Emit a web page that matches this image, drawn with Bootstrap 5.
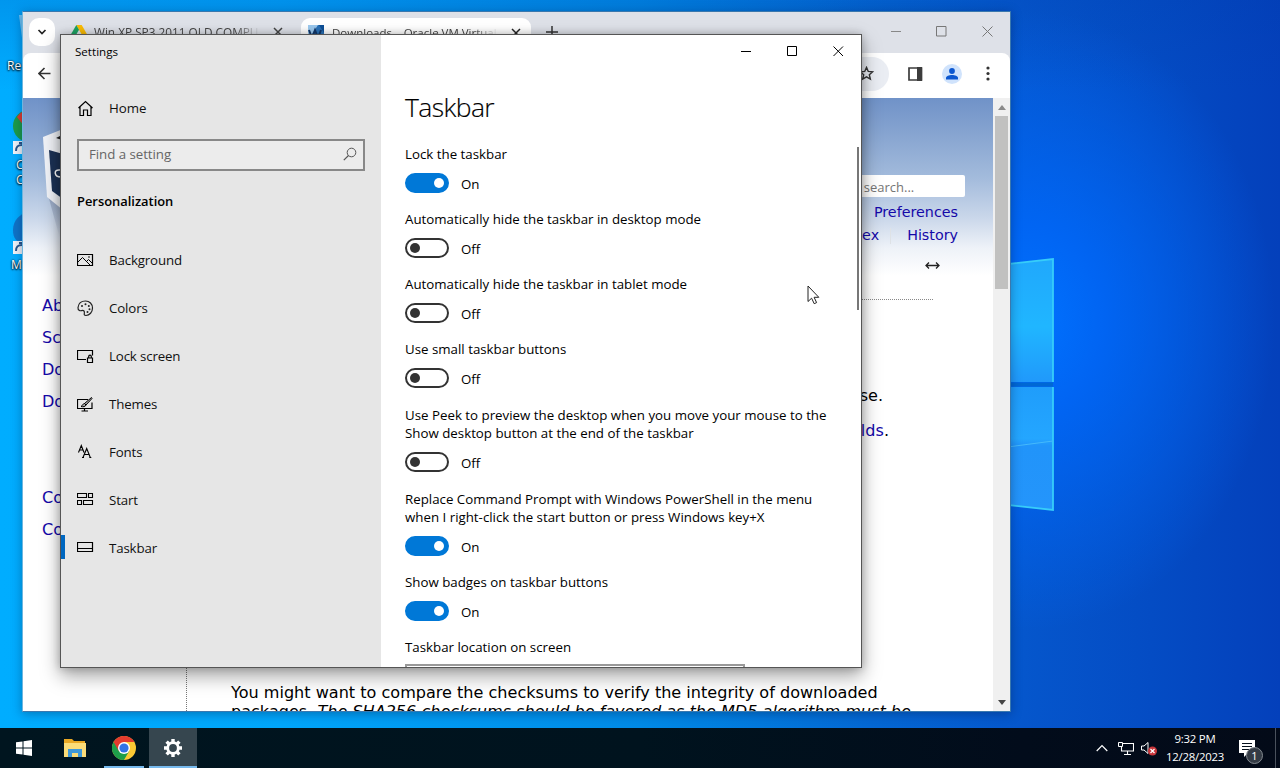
<!DOCTYPE html>
<html lang="en">
<head>
<meta charset="utf-8">
<meta name="viewport" content="width=device-width, initial-scale=1">
<title>Settings</title>
<link href="https://cdn.jsdelivr.net/npm/bootstrap@5.3.0/dist/css/bootstrap.min.css" rel="stylesheet">
<style>
  body { font-family: "Open Sans", "Noto Sans", sans-serif; font-size: 13.3px; line-height: 18px; color: #000; }
  svg { display: block; flex: none; }
  .desktop { width: 1280px; height: 768px;
    background:
      linear-gradient(180deg, rgba(0,60,170,.20) 0, rgba(0,60,170,0) 90px),
      radial-gradient(ellipse 245px 310px at 1030px 320px, #0071ff 0, rgba(0,104,250,.85) 30%, rgba(0,90,220,0) 100%),
      linear-gradient(90deg, #00adff 0, #00a6fb 22%, #008ae6 50%, #0468d4 68%, #0556cc 80%, #044cc4 90%, #0440bb 100%); }
  .wall { left: 1000px; top: 240px; }

  /* desktop shortcuts */
  .shortcut { color: #fff; font-size: 12px; line-height: 15px; text-shadow: 0 1px 2px #000, 0 0 2px #000; }

  /* browser window */
  .browser { left: 22px; top: 11px; width: 989px; height: 701px; border: 1px solid #3a78ae; border-left-color: #6db6df; background: #fff; box-shadow: 0 2px 10px rgba(0,20,60,.35); }
  .tabstrip { height: 41px; background: #dee1e8; }
  .tab-search { width: 26px; height: 28px; border-radius: 10px; background: #fff; margin: 6px 0 0 6px; }
  .tab-title { font-size: 11.8px; color: #444; width: 166px; overflow: hidden; -webkit-mask-image: linear-gradient(90deg, #000 85%, transparent); mask-image: linear-gradient(90deg, #000 85%, transparent); }
  .tab-open { width: 230px; height: 36px; margin-top: 6px; background: #fff; border-radius: 9px 9px 0 0; }
  .tool { height: 45px; border-radius: 8px 8px 0 0; }
  .omni { width: 60px; height: 34px; border-radius: 17px; background: #eaedf3; }
  .avatar { width: 20px; height: 20px; background: #d0e3fc; }
  .page-view { font-family: "DejaVu Sans", Verdana, sans-serif; font-size: 16.07px;
    background: linear-gradient(180deg, #7092c8 0, #86a4d0 35px, #a3bbdc 80px, #cad7ea 120px, #eef2f8 150px, #fff 178px); }
  .page-view a { color: #1508a8; text-decoration: none; }
  .side-links { width: 164px; padding-left: 19px; padding-top: 192px; line-height: 32px; }
  .side-links::after { content: ""; margin: auto 0 0 auto; height: 60px; border-right: 1px dotted #777; }
  .hsearch { width: 143px; height: 22px; background: #fff; border-radius: 2px; color: #757575; font-family: "Open Sans", sans-serif; font-size: 13px; line-height: 24px; padding-right: 9px; }
  .hlink { font-size: 14.3px; line-height: 23px; }
  .wiki-rule { border-top: 1px dotted #888; width: 702px; }
  .sbar { width: 17px; background: #f0f0f0; }
  .sthumb { width: 13px; height: 173px; background: #c1c1c0; }

  /* settings window */
  .settings { left: 60px; top: 34px; width: 802px; height: 634px; border: 1px solid #555; background: #fff; box-shadow: 0 8px 18px rgba(0,0,0,.36), 0 0 8px rgba(0,0,0,.22); }
  .pane-left { width: 320px; background: #e6e6e6; }
  .find { width: 288px; height: 32px; border: 2px solid #888; color: #666; font-size: 13.3px; background: #ececec; }
  .side-item { height: 48px; padding-left: 16px; gap: 15px; color: #111; letter-spacing: -.15px; }
  .side-item.current { padding-left: 0; }
  .side-item.current::before { content: ""; width: 4px; height: 24px; background: #0067c0; margin: -2px -3px 0 0; }
  .big-title { font-size: 26.5px; line-height: 36px; font-weight: 300; letter-spacing: -.6px; color: #000; -webkit-text-stroke: .15px #000; }
  .opt { margin-bottom: 16px; }
  .opt-wide { margin-bottom: 17px; }
  .switch { width: 44px; height: 20px; border: 2px solid #333; border-radius: 10px; margin: 10px 12px 0 0; padding: 0 3px; }
  .switch::after { content: ""; width: 10px; height: 10px; border-radius: 50%; background: #333; }
  .switch.is-on { background: #0078d7; border-color: #0078d7; justify-content: flex-end; }
  .switch.is-on::after { background: #fff; }
  .state { height: 20px; margin-top: 11px; line-height: 20px; }
  .combo { width: 340px; height: 32px; border: 2px solid #999; margin-top: -8px; }
  .pane-scroll { width: 2px; height: 163px; background: #777; top: 112px; right: 2px; }

  /* bottom bar */
  .taskbar { height: 40px; background: linear-gradient(90deg, #00151f 0, #00131e 50%, #020c1b 80%, #030a18 100%); color: #fff; }
  .tb-app { width: 48px; height: 40px; }
  .tb-run { height: 2px; background: #76b9ed; }
  .clock { font-size: 11.4px; line-height: 18px; width: 62px; letter-spacing: -.25px; }
  .note-count { width: 17px; height: 17px; border-radius: 50%; background: #343b45; border: 1px solid #858b92; font-size: 11px; line-height: 15px; left: 7px; top: 7px; }
</style>
</head>
<body class="m-0 overflow-hidden">
<div class="desktop position-relative overflow-hidden d-flex flex-column justify-content-end">

  <!-- wallpaper window logo -->
  <svg class="wall position-absolute" width="70" height="285" viewBox="1000 240 70 285">
    <defs>
      <linearGradient id="p1" x1="0" y1="0" x2="0" y2="1"><stop offset="0" stop-color="#20a8fc"/><stop offset=".55" stop-color="#20b6ff"/><stop offset="1" stop-color="#2099fb"/></linearGradient>
      <linearGradient id="p2" x1="0" y1="0" x2="0" y2="1"><stop offset="0" stop-color="#1f9dfb"/><stop offset=".42" stop-color="#24a6ff"/><stop offset=".48" stop-color="#2194fa"/><stop offset="1" stop-color="#2495fb"/></linearGradient>
    </defs>
    <path d="M1000 265l53-6v123h-53z" fill="url(#p1)"/>
    <path d="M1000 387h53v123l-53-6z" fill="url(#p2)"/>
    <path d="M1000 382.500h53v4h-53z" fill="#0068d4"/>
    <path d="M1000 265l53-6v123M1053 387v123l-53-6" fill="none" stroke="#37cdf9" stroke-width="1.800"/>
    <path d="M1000 448l53-7" stroke="#45b9fb" fill="none"/>
  </svg>

  <!-- desktop shortcuts, mostly behind the windows -->
  <div class="shortcut position-absolute" style="left:7px;top:58px">Re</div>
  <svg class="position-absolute" style="left:12px;top:12px" width="16" height="44"><path d="M7 3h9v38h-4z" fill="#b8dcf2" opacity=".6"/></svg>
  <svg class="position-absolute" style="left:12px;top:100px" width="16" height="62"><circle cx="17" cy="26" r="16" fill="#1c9b49"/><path d="M5 17a16 16 0 0 1 12-7v16l-5 0z" fill="#e23a2e"/><rect x="1" y="41" width="13" height="13" fill="#eef3f8"/><path d="M4 51c0-5 2-6 6-6m-3-2h5v5" stroke="#28568c" stroke-width="2" fill="none"/></svg>
  <div class="shortcut position-absolute" style="left:16px;top:157px">C<br>C</div>
  <svg class="position-absolute" style="left:12px;top:210px" width="16" height="50"><path d="M1 20C1 10 8 4 16 2v30C6 34 1 30 1 20z" fill="#0f74c8"/><rect x="1" y="31" width="13" height="13" fill="#eef3f8"/><path d="M4 41c0-5 2-6 6-6m-3-2h5v5" stroke="#28568c" stroke-width="2" fill="none"/></svg>
  <div class="shortcut position-absolute" style="left:11px;top:257px">M</div>

  <!-- browser -->
  <div class="browser position-absolute d-flex flex-column overflow-hidden">
    <div class="tabstrip d-flex flex-shrink-0">
      <div class="tab-search d-flex align-items-center justify-content-center"><svg width="12" height="12"><path d="M2.500 4L6 7.500 9.500 4" fill="none" stroke="#222" stroke-width="1.700"/></svg></div>
      <div class="d-flex align-items-center ps-3" style="width:251px;padding-bottom:2px">
        <svg class="me-2" width="16" height="14" viewBox="0 0 16 14"><path d="M5.300 0h5.400L16 9.300h-5.400z" fill="#fbbc04"/><path d="M5.300 0L0 9.300 2.700 14 8 4.700z" fill="#1ea362"/><path d="M5.400 9.300H16L13.300 14H2.700z" fill="#4285f4"/></svg>
        <span class="tab-title text-nowrap" style="margin-left:-1px">Win XP SP3 2011 OLD COMPU</span>
        <svg style="margin-left:13px" width="10" height="10"><path d="M1 1l8 8M9 1l-8 8" stroke="#444" stroke-width="1.500"/></svg>
      </div>
      <div class="tab-open d-flex align-items-center" style="margin-left:-5px;padding:0 0 7px 7px">
        <svg class="me-2" width="16" height="16"><rect width="16" height="16" fill="#2b72b8"/><path d="M0 0h10L4 9H0z" fill="#9cc9ee"/><path d="M1 5l3 8 3-8 3 8 3-8" stroke="#12386a" stroke-width="2" fill="none"/><path d="M11 0h5v8z" fill="#0e4f96"/></svg>
        <span class="tab-title text-nowrap" style="font-size:11.500px">Downloads – Oracle VM Virtual</span>
        <svg style="margin-left:13px" width="10" height="10"><path d="M1 1l8 8M9 1l-8 8" stroke="#222" stroke-width="1.500"/></svg>
      </div>
      <svg style="margin:14px 0 0 15px" width="12" height="12"><path d="M6 0v12M0 6h12" stroke="#333" stroke-width="1.500"/></svg>
      <div class="ms-auto d-flex align-items-center" style="gap:35px;padding:0 17px 3px 0">
        <svg width="10" height="11"><path d="M0 5.500h10" stroke="#888"/></svg>
        <svg width="11" height="11"><path d="M.5.5h9.500v9.500H.5z" fill="none" stroke="#777"/></svg>
        <svg width="11" height="11"><path d="M.5.5l10 10M10.500.5l-10 10" stroke="#777"/></svg>
      </div>
    </div>
    <div style="background:#dee1e8">
      <div class="tool bg-white d-flex align-items-center pb-1">
        <svg style="margin-left:15px" width="13" height="13"><path d="M12.500 6.500H1.500M6.500 1L1 6.500 6.500 12" fill="none" stroke="#333" stroke-width="1.600"/></svg>
        <div class="omni ms-auto d-flex align-items-center justify-content-end" style="margin-right:19px;padding-right:15px"><svg width="15" height="15" viewBox="0 0 16 16"><path d="M8 1.500l1.900 4.300 4.700.4-3.600 3.100 1.100 4.600L8 11.500l-4.100 2.400L5 9.300 1.400 6.200l4.700-.4z" fill="none" stroke="#333" stroke-width="1.500"/></svg></div>
        <svg width="15" height="14"><path d="M1 1h12.500v12H1z" fill="none" stroke="#3c3c3c" stroke-width="1.700"/><path d="M9 0h5v14H9z" fill="#3c3c3c"/></svg>
        <div class="avatar rounded-circle d-flex align-items-center justify-content-center" style="margin:0 24px 0 19px"><svg width="14" height="14"><circle cx="7" cy="4" r="2.900" fill="#0b57d0"/><path d="M1 12.500v-1.500C1 9 4 8 7 8s6 1 6 3v1.500z" fill="#0b57d0"/></svg></div>
        <svg style="margin-right:20px" width="4" height="15"><circle cx="2" cy="2" r="1.600" fill="#333"/><circle cx="2" cy="7.500" r="1.600" fill="#333"/><circle cx="2" cy="13" r="1.600" fill="#333"/></svg>
      </div>
    </div>
    <div class="page-view d-flex flex-grow-1 overflow-hidden">
      <div class="side-links flex-shrink-0 d-flex flex-column position-relative">
        <svg class="position-absolute" style="left:15px;top:30px" width="50" height="112" viewBox="38 129 50 112"><defs><linearGradient id="sh" x1="0" y1="0" x2="0" y2="1"><stop offset="0" stop-color="#6d7c9c" stop-opacity=".5"/><stop offset="1" stop-color="#6d7c9c" stop-opacity="0"/></linearGradient></defs><path d="M48 196l40 22v22H60z" fill="url(#sh)"/><path d="M43 138l20-8v81l-16-13z" fill="#f1f3f8"/><path d="M49 151l14 4v45l-11-8z" fill="#1c3256"/><path d="M56 139l6-3v5z" fill="#222"/><path d="M60 171c-7-1-6 7 1 7" stroke="#fff" stroke-width="1.500" fill="none"/></svg>
        <a href="#">Abo</a><a href="#">Scr</a><a href="#">Doc</a><a href="#" class="mb-5">Doc</a>
        <a href="#" style="margin-top:16px">Con</a><a href="#">Com</a>
      </div>
      <div class="flex-grow-1">
        <div class="d-flex flex-column align-items-end" style="padding:77px 28px 0 0;height:201px">
          <div class="hsearch text-center">search...</div>
          <div class="hlink" style="margin:4px 7px 0 0"><a href="#">Preferences</a></div>
          <div class="hlink d-flex align-items-center" style="margin-right:7px"><a href="#">ex</a><span class="border-start" style="height:16px;margin:0 16px 0 11px"></span><a href="#">History</a></div>
          <svg style="margin:14px 25px 0 0" width="15" height="9"><path d="M1 4.500h13M4 1.500l-3 3 3 3M11 1.500l3 3-3 3" fill="none" stroke="#222" stroke-width="1.300"/></svg>
        </div>
        <div class="wiki-rule ms-auto" style="margin-right:60px"></div>
        <div class="text-end" style="padding:84px 110px 0 0;line-height:24px">se.</div>
        <div class="text-end" style="padding:11px 104px 0 0;line-height:24px"><a href="#">lds</a>.</div>
        <div class="text-nowrap" style="padding-left:44px;margin-top:240px;line-height:19px">You might want to compare the checksums to verify the integrity of downloaded<br>packages. <i>The SHA256 checksums should be favored as the MD5 algorithm must be</i></div>
      </div>
      <div class="sbar flex-shrink-0 d-flex flex-column align-items-center">
        <svg style="margin:7px 0 6px" width="8" height="5"><path d="M0 5l4-5 4 5z" fill="#8a8a8a"/></svg>
        <div class="sthumb"></div>
        <svg class="mt-auto" style="margin-bottom:6px" width="8" height="5"><path d="M0 0h8L4 5z" fill="#444"/></svg>
      </div>
    </div>
  </div>

  <!-- settings -->
  <div class="settings position-absolute d-flex overflow-hidden">
    <div class="pane-left flex-shrink-0">
      <div style="font-size:11.600px;padding:8px 0 0 14px">Settings</div>
      <div class="side-item d-flex align-items-center" style="margin-top:23px;letter-spacing:0">
        <svg width="17" height="17"><path d="M1.500 8L8.500 1.500 15.500 8M3 7v8.500h3.500v-5.500h4v5.500h3.500V7" fill="none" stroke="#000" stroke-width="1.200"/></svg><span>Home</span>
      </div>
      <div class="find d-flex align-items-center justify-content-between" style="margin:7px 0 0 16px;padding:0 6px 2px 10px">
        <span style="letter-spacing:-.05px">Find a setting</span>
        <svg width="14" height="14"><circle cx="8.500" cy="5.500" r="4.300" fill="none" stroke="#555"/><path d="M5.500 8.500L.8 13.200" stroke="#555" stroke-width="1.200"/></svg>
      </div>
      <div style="font-weight:600;font-size:12.900px;padding:21px 0 26px 16px">Personalization</div>
      <div class="side-item d-flex align-items-center">
        <svg width="17" height="17"><path d="M.5 2.500h15v11H.5z" fill="none" stroke="#000" stroke-width="1.200"/><path d="M1 10l4.500-4.500 7.500 7.500M9.500 9.500L11.500 7.500l4 4" fill="none" stroke="#000"/><circle cx="12" cy="5" r=".8"/></svg><span>Background</span>
      </div>
      <div class="side-item d-flex align-items-center">
        <svg width="17" height="17"><path d="M1 7.500C1.500 3.500 4.500 1 8.500 1c4 0 7 3 7 7s-3 7.500-6.500 7.500c-3.500 0-.5-3-2-4.500C5.500 9.500 4 11.500 2.500 10.500 1 9.700.8 9 1 7.500z" fill="none" stroke="#222" stroke-width="1.200"/><g fill="#222"><circle cx="5" cy="6" r="1"/><circle cx="8.500" cy="4.200" r="1"/><circle cx="11.800" cy="6" r="1"/><circle cx="12.500" cy="9.300" r="1"/><circle cx="10.500" cy="12" r="1"/></g></svg><span>Colors</span>
      </div>
      <div class="side-item d-flex align-items-center">
        <svg width="17" height="17"><path d="M9 11.500H.5v-9h15v5" fill="none" stroke="#000" stroke-width="1.200"/><path d="M10.500 10h5v4.500h-5zM11.700 10V8.500a1.300 1.300 0 0 1 2.600 0V10" fill="none" stroke="#000" stroke-width="1.200"/></svg><span>Lock screen</span>
      </div>
      <div class="side-item d-flex align-items-center">
        <svg width="17" height="17"><path d="M11 3.500H.5v9h14.500V6.500M7.500 12.500v2.500M4.500 15h6.500" fill="none" stroke="#000" stroke-width="1.200"/><path d="M14.500 1.500l-7 6 1.500 1.500 6-6.500zM7.500 7.500C5.500 7.700 6 9.500 4 10.500c2 .5 4.500.3 5-1.500z" fill="#aaa" stroke="#000"/></svg><span>Themes</span>
      </div>
      <div class="side-item d-flex align-items-center">
        <svg width="17" height="17"><path d="M1.500 8.500L4.300 1.500 7 8.500M2.500 6h3.600M6 13.500l3.700-9 3.600 9M7.300 10.500h4.900M5 13.500h2M12.300 13.500h2" fill="none" stroke="#000" stroke-width="1.100"/></svg><span>Fonts</span>
      </div>
      <div class="side-item d-flex align-items-center">
        <svg width="17" height="17"><path d="M.5 1.500h9v4h-9zM11.500 1.500h4v4h-4zM.5 8.500h4v4h-4zM6.500 8.500h9v4h-9z" fill="none" stroke="#000" stroke-width="1.100"/></svg><span>Start</span>
      </div>
      <div class="side-item current d-flex align-items-center">
        <svg width="17" height="17"><path d="M.5 2.500h15v9H.5zM.5 8.500h15" fill="none" stroke="#000" stroke-width="1.200"/></svg><span>Taskbar</span>
      </div>
    </div>
    <div class="flex-grow-1 d-flex flex-column">
      <div class="d-flex justify-content-end" style="gap:35px;padding:11px 17px 0 0">
        <svg width="11" height="11"><path d="M0 5.500h10" stroke="#000"/></svg>
        <svg width="11" height="11"><path d="M.5.500h9v9h-9z" fill="none" stroke="#000"/></svg>
        <svg width="11" height="11"><path d="M.5.500l9.500 9.500M10 .5L.5 10" stroke="#000"/></svg>
      </div>
      <div style="padding:32px 0 0 24px">
        <div class="big-title" style="margin-bottom:20px">Taskbar</div>
        <div class="opt"><div>Lock the taskbar</div><div class="d-flex"><span class="switch is-on d-flex align-items-center"></span><span class="state">On</span></div></div>
        <div class="opt"><div>Automatically hide the taskbar in desktop mode</div><div class="d-flex"><span class="switch d-flex align-items-center"></span><span class="state">Off</span></div></div>
        <div class="opt"><div>Automatically hide the taskbar in tablet mode</div><div class="d-flex"><span class="switch d-flex align-items-center"></span><span class="state">Off</span></div></div>
        <div class="opt-wide"><div>Use small taskbar buttons</div><div class="d-flex"><span class="switch d-flex align-items-center"></span><span class="state">Off</span></div></div>
        <div class="opt-wide"><div>Use Peek to preview the desktop when you move your mouse to the<br>Show desktop button at the end of the taskbar</div><div class="d-flex"><span class="switch d-flex align-items-center"></span><span class="state">Off</span></div></div>
        <div class="opt"><div>Replace Command Prompt with Windows PowerShell in the menu<br>when I right-click the start button or press Windows key+X</div><div class="d-flex"><span class="switch is-on d-flex align-items-center"></span><span class="state">On</span></div></div>
        <div class="opt"><div>Show badges on taskbar buttons</div><div class="d-flex"><span class="switch is-on d-flex align-items-center"></span><span class="state">On</span></div></div>
        <div class="opt">Taskbar location on screen</div>
        <div class="combo"></div>
      </div>
    </div>
    <div class="pane-scroll position-absolute"></div>
  </div>

  <!-- mouse pointer -->
  <svg class="position-absolute" style="left:807px;top:285px" width="13" height="20"><path d="M1 1v15.500l3.600-3.300 2.600 5.500 2.400-1.100-2.500-5.300h4.700z" fill="#fff" stroke="#222"/></svg>

  <!-- bottom bar -->
  <div class="taskbar position-relative d-flex align-items-center">
    <div class="tb-app d-flex align-items-center justify-content-center"><svg width="16" height="16"><path d="M0 2.300L6.500 1.400v6.100H0zM7.500 1.200L16 0v7.500H7.500zM0 8.500h6.500v6.100L0 13.700zM7.500 8.500H16V16l-8.500-1.200z" fill="#fff"/></svg></div>
    <div class="tb-app d-flex align-items-center justify-content-center" style="margin-left:3px"><svg width="22" height="18"><path d="M0 0h8l2 2h11v15H0z" fill="#e9a824"/><path d="M0 4h22v14H0z" fill="#fbdc78"/><path d="M4 18v-8h14v8h-4v-4H8v4z" fill="#3f98d8"/></svg></div>
    <div class="tb-app d-flex align-items-center justify-content-center position-relative"><svg width="24" height="24" viewBox="0 0 24 24" style="margin-right:-1px"><circle cx="12" cy="12" r="12" fill="#fcc934"/><path d="M12 12L1.600 6A12 12 0 0 0 12 24l5.200-9z" fill="#1e9e4a"/><path d="M1.600 6A12 12 0 0 1 22.400 6H12v6l-5.200 3z" fill="#e33b2e"/><circle cx="12" cy="12" r="6" fill="#fff"/><circle cx="12" cy="12" r="4.600" fill="#3173e6"/></svg><span class="tb-run position-absolute bottom-0" style="left:5px;width:40px"></span></div>
    <div class="tb-app d-flex align-items-center justify-content-center position-relative" style="margin-left:2px;background:#36464f"><svg width="20" height="20" viewBox="-10 -10 20 20"><circle r="5.300" fill="none" stroke="#fff" stroke-width="2.800"/><g stroke="#fff" stroke-width="3.400"><path d="M0-9v3M0 9V6M-9 0h3M9 0H6M-6.400-6.400l2.200 2.200M6.400 6.400L4.200 4.200M-6.400 6.400l2.200-2.200M6.400-6.400L4.200-4.200"/></g></svg><span class="tb-run position-absolute bottom-0 start-0 w-100"></span></div>

    <svg class="ms-auto" style="margin-right:10px" width="12" height="8"><path d="M.7 7L6 1.500 11.300 7" fill="none" stroke="#fff" stroke-width="1.200"/></svg>
    <svg style="margin-right:7px" width="16" height="15"><path d="M5 2.500h10.500v7.500H3.500V6M9.500 10v3.500M6 13.500h7" fill="none" stroke="#fff" stroke-width="1.100"/><path d="M.5 1.500h4v4h-4z" fill="#0a1420" stroke="#fff"/></svg>
    <svg style="margin-right:6px" width="17" height="15"><path d="M.5 5h2.500L7 1.500v11L3 9H.5z" fill="none" stroke="#fff"/><circle cx="11.500" cy="10" r="4.500" fill="#c8353a"/><path d="M9.500 8l4 4M13.500 8l-4 4" stroke="#fff" stroke-width="1.200"/></svg>
    <div class="clock text-center">9:32 PM<br>12/28/2023</div>
    <div class="position-relative" style="margin:0 19px 0 13px"><svg width="17" height="17"><path d="M0 0h16v13H9l-4 4v-4H0z" fill="#fff"/><path d="M3 3.500h10M3 6.500h10M3 9.500h7" stroke="#06101c"/></svg><span class="note-count position-absolute text-center">1</span></div>
    <div style="width:5px;height:40px;border-left:1px solid #4a515c"></div>
  </div>
</div>
<script src="https://cdn.jsdelivr.net/npm/bootstrap@5.3.0/dist/js/bootstrap.bundle.min.js"></script>
</body>
</html>
